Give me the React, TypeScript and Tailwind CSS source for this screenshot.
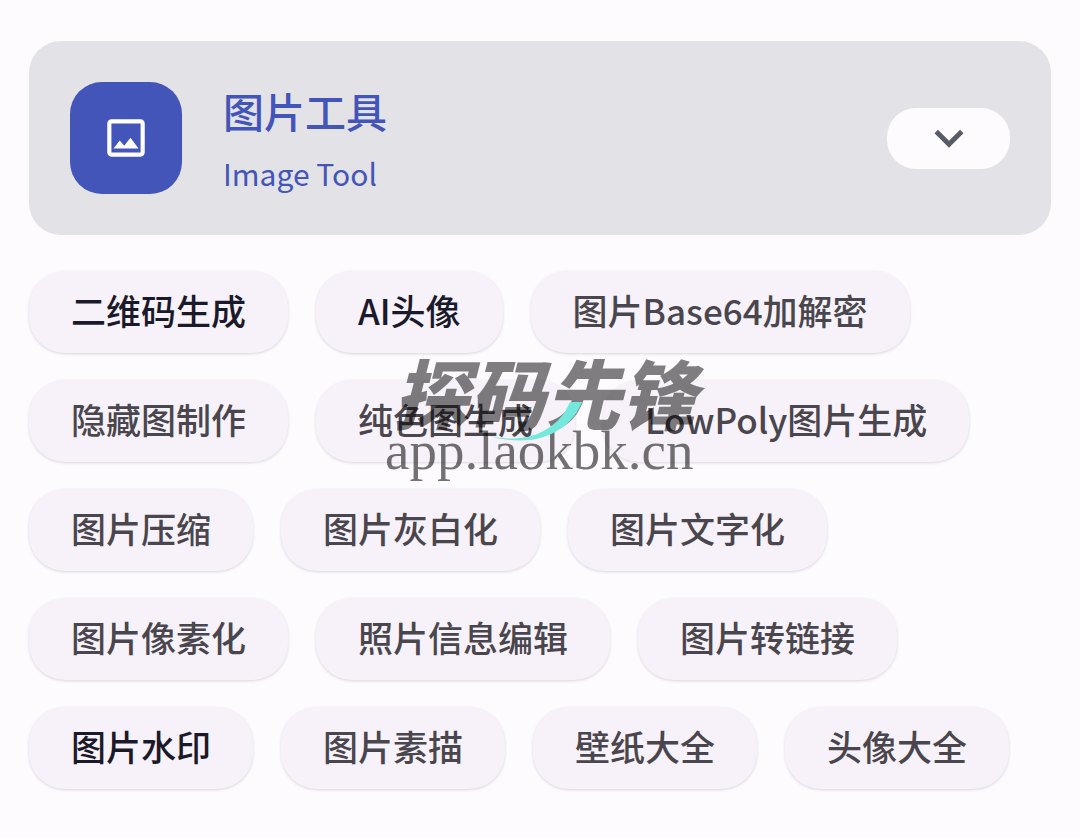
const tools = [
  { name: "二维码生成", active: true },
  { name: "AI头像", active: true },
  { name: "图片Base64加解密" },
  { name: "隐藏图制作" },
  { name: "纯色图生成" },
  { name: "LowPoly图片生成" },
  { name: "图片压缩" },
  { name: "图片灰白化" },
  { name: "图片文字化" },
  { name: "图片像素化" },
  { name: "照片信息编辑" },
  { name: "图片转链接" },
  { name: "图片水印", active: true },
  { name: "图片素描" },
  { name: "壁纸大全" },
  { name: "头像大全" },
];

function ToolChip({ name, active }: { name: string; active?: boolean }) {
  return (
    <button
      type="button"
      className={`h-[82px] rounded-[36px] bg-[#f7f2f9] px-[42px] pb-1 text-[35px] leading-[40px] font-medium whitespace-nowrap shadow-[0_1px_3px_rgba(0,0,0,0.15)] ${active ? "text-[#1b1a2b]" : "text-[#4a464d]"}`}
    >
      {name}
    </button>
  );
}

function Watermark() {
  return (
    <div className="pointer-events-none absolute top-[351px] left-[385px]">
      <p className="pl-2 font-['Noto_Sans_CJK_SC',sans-serif] text-[76px] leading-[80px] font-black whitespace-nowrap text-black/50 italic">探码先锋</p>
      <p className="-mt-[10px] font-['Liberation_Serif',serif] text-[55px] leading-[60px] whitespace-nowrap text-black/55">app.laokbk.cn</p>
      <svg className="absolute top-[51px] left-0 h-[44px] w-[200px]" viewBox="0 0 200 44" fill="none">
        <path d="M185 0H197C190 18 174 32 151 37C137 40 116 38 104 34C120 38 140 37 152 32C169 25 179 14 185 0Z" fill="#74e8dd" />
      </svg>
    </div>
  );
}

export default function App() {
  return (
    <main className="relative min-h-screen bg-[#fefbff] px-[29px] pt-[41px] pb-12 font-['Noto_Sans_CJK_SC',sans-serif]">
      {/* Header */}
      <header className="flex items-center rounded-[32px] bg-[#e3e2e6] px-[41px] py-10">
        <div className="flex size-28 shrink-0 items-center justify-center rounded-[32px] bg-[#4355b9]">
          <svg className="size-[50px]" viewBox="0 0 24 24" fill="#fff">
            <path d="M19 5v14H5V5h14m0-2H5c-1.1 0-2 .9-2 2v14c0 1.1.9 2 2 2h14c1.1 0 2-.9 2-2V5c0-1.1-.9-2-2-2zm-4.860 8.860-3 3.870L9 13.140 6 17h12l-3.860-5.140z" />
          </svg>
        </div>
        <div className="ml-[41px] flex-1 text-[#4355b9]">
          <h1 className="text-[41px] leading-[58px] font-medium">图片工具</h1>
          <p className="pt-3 text-[30px] leading-[44px]">Image Tool</p>
        </div>
        <button type="button" aria-label="展开" className="flex h-[61px] w-[123px] items-center justify-center rounded-[29px] bg-[#fefbff]">
          <svg className="size-[58px]" viewBox="0 0 24 24" fill="#585c68">
            <path d="M7.410 8.590 12 13.170l4.590-4.580L18 10l-6 6-6-6 1.410-1.410z" />
          </svg>
        </button>
      </header>

      {/* Tools */}
      <section className="mt-9 flex flex-wrap gap-x-7 gap-y-[27px]">
        {tools.map((tool) => (
          <ToolChip key={tool.name} {...tool} />
        ))}
      </section>

      <Watermark />
    </main>
  );
}
